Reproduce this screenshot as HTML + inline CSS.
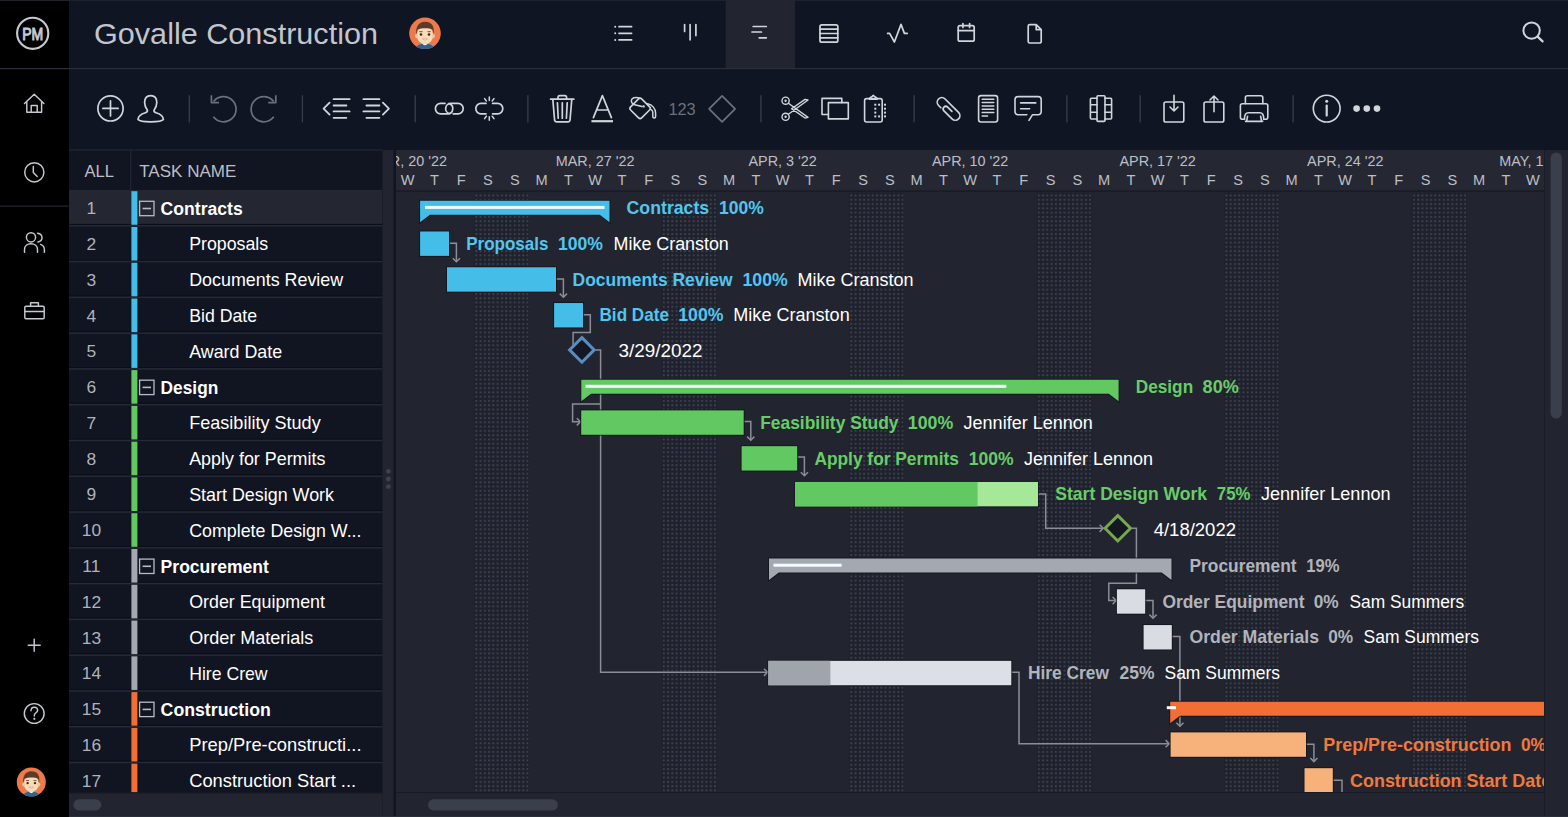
<!DOCTYPE html><html><head><meta charset="utf-8"><title>Govalle Construction</title><style>
html,body{margin:0;padding:0;width:1568px;height:817px;overflow:hidden;background:#0f1522;font-family:"Liberation Sans", sans-serif}
svg{position:absolute;left:0;top:0;display:block}
</style></head><body>
<svg width="1568" height="817" viewBox="0 0 1568 817" font-family='"Liberation Sans", sans-serif'>
<defs>
<pattern id="dots3" x="475.27" y="194.5" width="4.27" height="4.28" patternUnits="userSpaceOnUse"><rect x="0" y="0" width="2" height="2" rx="0.6" fill="#3d4150"/></pattern>
<pattern id="dots10" x="662.80" y="194.5" width="4.27" height="4.28" patternUnits="userSpaceOnUse"><rect x="0" y="0" width="2" height="2" rx="0.6" fill="#3d4150"/></pattern>
<pattern id="dots17" x="850.33" y="194.5" width="4.27" height="4.28" patternUnits="userSpaceOnUse"><rect x="0" y="0" width="2" height="2" rx="0.6" fill="#3d4150"/></pattern>
<pattern id="dots24" x="1037.86" y="194.5" width="4.27" height="4.28" patternUnits="userSpaceOnUse"><rect x="0" y="0" width="2" height="2" rx="0.6" fill="#3d4150"/></pattern>
<pattern id="dots31" x="1225.39" y="194.5" width="4.27" height="4.28" patternUnits="userSpaceOnUse"><rect x="0" y="0" width="2" height="2" rx="0.6" fill="#3d4150"/></pattern>
<pattern id="dots38" x="1412.92" y="194.5" width="4.27" height="4.28" patternUnits="userSpaceOnUse"><rect x="0" y="0" width="2" height="2" rx="0.6" fill="#3d4150"/></pattern>
<clipPath id="gclip"><rect x="396" y="150" width="1148" height="642.6"/></clipPath>
<clipPath id="gridclip"><rect x="69" y="150" width="313.5" height="642.6"/></clipPath>
</defs>
<rect x="0" y="0" width="1568" height="817" fill="#0f1522"/>
<rect x="0" y="0" width="69" height="817" fill="#000000"/>
<rect x="0" y="68" width="1568" height="1.2" fill="#2b2f3b"/>
<rect x="0" y="0" width="1568" height="1" fill="#1e222d"/>
<rect x="0" y="205.6" width="68.5" height="1" fill="#2b2f3b"/>
<rect x="725.6" y="0" width="69.4" height="68" fill="#222530"/>
<g fill="none" stroke="#c6c9d0" stroke-width="2.1">
<circle cx="32.7" cy="33.3" r="15.6"/>
</g>
<text x="32.70" y="40.00" font-size="16.60" fill="#c6c9d0" text-anchor="middle" textLength="21.00" lengthAdjust="spacingAndGlyphs" stroke="#c6c9d0" stroke-width="1">PM</text>
<g fill="none" stroke="#c6c9d0" stroke-width="1.45" stroke-linejoin="round" stroke-linecap="round">
<path d="M24.5 103.5 L34.2 94.2 L43.9 103.5 M26.8 101.5 V112.2 H41.6 V101.5 M31.2 112.2 V105.5 H37.2 V112.2"/>
<circle cx="34.3" cy="172.3" r="9.6"/><path d="M33.3 166.5 V172.6 L37.2 176.4"/>
<circle cx="31" cy="237.3" r="4.6"/><path d="M24.5 252.3 V249.5 C24.5 245.8 27.4 243.8 31 243.8 C34.6 243.8 37.5 245.8 37.5 249.5 V252.3"/>
<path d="M37.6 233.2 C40.4 233.6 42 235.6 42 237.6 C42 239.8 40.2 241.6 38 242 M40.6 244.4 C43 245.3 44.4 247.1 44.4 249.6 V252.3"/>
<rect x="24.8" y="306.2" width="19.4" height="12.6" rx="1.2"/><path d="M30.6 306.2 V302.8 H38.4 V306.2 M24.8 311.4 H44.2"/>
<path d="M34.2 639.3 V651.3 M28.2 645.3 H40.2"/>
<circle cx="34.2" cy="713.5" r="9.9"/><path d="M31 710.8 C31 708.6 32.5 707.3 34.3 707.3 C36.2 707.3 37.6 708.6 37.6 710.4 C37.6 712.6 34.3 713 34.3 715.4 V716"/>
</g>
<circle cx="34.3" cy="718.8" r="1.1" fill="#c6c9d0"/>
<g transform="translate(31.30 782.00) scale(0.9177)">
<clipPath id="av1"><circle cx="0" cy="0" r="15.8"/></clipPath>
<circle cx="0" cy="0" r="15.8" fill="#ec7a4b"/>
<g clip-path="url(#av1)">
<path d="M-10 17 C-9 12 -5 10.5 0 10.5 C5 10.5 9 12 10 17 Z" fill="#2d6496"/>
<rect x="-2" y="7" width="4" height="4.5" fill="#f3d3b0"/>
<path d="M-2.2 10.4 L0 12.2 L2.2 10.4" fill="#ffffff"/>
</g>
<ellipse cx="0" cy="1.8" rx="8.2" ry="9.2" fill="#f8dcb9"/>
<ellipse cx="-8.2" cy="2.6" rx="1.6" ry="2.3" fill="#f1c9a0"/><ellipse cx="8.2" cy="2.6" rx="1.6" ry="2.3" fill="#f1c9a0"/>
<path d="M-8.6 1.5 C-9.8 -6 -6.5 -11.6 0 -11.6 C6.8 -11.6 9.8 -7 8.6 1.5 L7.6 -3.6 C4 -5.4 -3 -5.6 -7.6 -3.6 Z" fill="#5b3b2b"/>
<circle cx="-4" cy="1.2" r="1.3" fill="#3a2318"/><circle cx="4" cy="1.2" r="1.3" fill="#3a2318"/>
<path d="M-5.8 -1.6 H-2.4 M2.4 -1.6 H5.8" stroke="#6a4530" stroke-width="0.9"/>
<path d="M-2.6 5.6 Q0 8.2 2.6 5.6 Z" fill="#ffffff" stroke="#c9806a" stroke-width="0.5"/>
</g>
<text x="94.00" y="43.70" font-size="29.40" fill="#c2c5cd" textLength="284.00" lengthAdjust="spacingAndGlyphs">Govalle Construction</text>
<g transform="translate(425.00 33.30) scale(1.0000)">
<clipPath id="av2"><circle cx="0" cy="0" r="15.8"/></clipPath>
<circle cx="0" cy="0" r="15.8" fill="#ec7a4b"/>
<g clip-path="url(#av2)">
<path d="M-10 17 C-9 12 -5 10.5 0 10.5 C5 10.5 9 12 10 17 Z" fill="#2d6496"/>
<rect x="-2" y="7" width="4" height="4.5" fill="#f3d3b0"/>
<path d="M-2.2 10.4 L0 12.2 L2.2 10.4" fill="#ffffff"/>
</g>
<ellipse cx="0" cy="1.8" rx="8.2" ry="9.2" fill="#f8dcb9"/>
<ellipse cx="-8.2" cy="2.6" rx="1.6" ry="2.3" fill="#f1c9a0"/><ellipse cx="8.2" cy="2.6" rx="1.6" ry="2.3" fill="#f1c9a0"/>
<path d="M-8.6 1.5 C-9.8 -6 -6.5 -11.6 0 -11.6 C6.8 -11.6 9.8 -7 8.6 1.5 L7.6 -3.6 C4 -5.4 -3 -5.6 -7.6 -3.6 Z" fill="#5b3b2b"/>
<circle cx="-4" cy="1.2" r="1.3" fill="#3a2318"/><circle cx="4" cy="1.2" r="1.3" fill="#3a2318"/>
<path d="M-5.8 -1.6 H-2.4 M2.4 -1.6 H5.8" stroke="#6a4530" stroke-width="0.9"/>
<path d="M-2.6 5.6 Q0 8.2 2.6 5.6 Z" fill="#ffffff" stroke="#c9806a" stroke-width="0.5"/>
</g>
<g fill="none" stroke="#d2d5dc" stroke-width="1.7" stroke-linecap="round" stroke-linejoin="round">
<path d="M619 26.7 H631.6 M619 33.3 H631.6 M619 39.9 H631.6"/>
</g>
<g fill="#d2d5dc"><circle cx="615.2" cy="26.7" r="1"/><circle cx="615.2" cy="33.3" r="1"/><circle cx="615.2" cy="39.9" r="1"/></g>
<g fill="none" stroke="#d2d5dc" stroke-width="1.7" stroke-linecap="round" stroke-linejoin="round">
<path d="M684.6 24.6 V31.4 M690.1 24.6 V39.8 M695.9 24.6 V35.6"/>
<path d="M753.2 26.5 H766.3 M752 32 H761.4 M759.2 37.8 H766.3"/>
<rect x="820" y="24.8" width="17.8" height="17.4" rx="1.8"/><path d="M820 29.2 H837.8 M820 33.5 H837.8 M820 37.8 H837.8"/>
<path d="M887.6 33.4 H889.6 L894.4 42 L901 24.4 L904.4 33.4 H907.2"/>
<rect x="958.2" y="25.6" width="16" height="15.6" rx="1.8"/><path d="M958.2 30.6 H974.2 M962.9 23.6 V27.4 M969.6 23.6 V27.4"/>
<path d="M1029.8 24.6 H1036.2 L1041.2 29.6 V41.4 A1.6 1.6 0 0 1 1039.6 43 H1029.8 A1.6 1.6 0 0 1 1028.2 41.4 V26.2 A1.6 1.6 0 0 1 1029.8 24.6 Z M1036.2 24.6 V29.6 H1041.2"/>
<circle cx="1531.6" cy="30.6" r="8.2" stroke-width="2"/><path d="M1537.6 36.6 L1542.6 41.4" stroke-width="2.2"/>
</g>
<rect x="188.65" y="95.2" width="1.3" height="27.2" fill="#3a3e4a"/>
<rect x="301.75" y="95.2" width="1.3" height="27.2" fill="#3a3e4a"/>
<rect x="414.55" y="95.2" width="1.3" height="27.2" fill="#3a3e4a"/>
<rect x="527.25" y="95.2" width="1.3" height="27.2" fill="#3a3e4a"/>
<rect x="760.25" y="95.2" width="1.3" height="27.2" fill="#3a3e4a"/>
<rect x="913.45" y="95.2" width="1.3" height="27.2" fill="#3a3e4a"/>
<rect x="1066.25" y="95.2" width="1.3" height="27.2" fill="#3a3e4a"/>
<rect x="1139.55" y="95.2" width="1.3" height="27.2" fill="#3a3e4a"/>
<rect x="1292.45" y="95.2" width="1.3" height="27.2" fill="#3a3e4a"/>
<g fill="none" stroke="#d2d5dc" stroke-width="1.7" stroke-linecap="round" stroke-linejoin="round">
<circle cx="110.5" cy="108.4" r="12.6"/><path d="M110.5 100.8 V116 M102.9 108.4 H118.1"/>
<path d="M150.7 95.6 C146.4 95.6 144.6 98.8 144.6 102.6 C144.6 106.2 146.2 108.6 147.4 110.2 C147.6 111.6 147 112.3 145.4 112.8 C140.6 114.2 138.2 116.2 138 119.6 C139 121 143 121.8 150.7 121.8 C158.4 121.8 162.4 121 163.4 119.6 C163.2 116.2 160.8 114.2 156 112.8 C154.4 112.3 153.8 111.6 154 110.2 C155.2 108.6 156.8 106.2 156.8 102.6 C156.8 98.8 155 95.6 150.7 95.6 Z"/>
<path d="M329.6 102.6 L323.6 108.6 L329.6 114.6 M333.6 99.2 H349.6 M333.6 105.5 H346.4 M333.6 111.4 H349.6 M333.6 117.8 H346.4" stroke-width="1.8"/>
<path d="M382.9 102.6 L388.9 108.6 L382.9 114.6 M363.4 99.2 H379.4 M366.4 105.5 H379.4 M363.4 111.4 H379.4 M366.4 117.8 H379.4" stroke-width="1.8"/>
<path d="M445 103.4 H440.6 A5.2 5.2 0 0 0 440.6 113.8 H447.6 A5.2 5.2 0 0 0 449 103.6" />
<path d="M453.2 113.8 H458 A5.2 5.2 0 0 0 458 103.4 H451 A5.2 5.2 0 0 0 449.4 113.6" />
<path d="M486 103.4 H481 A5.2 5.2 0 0 0 481 113.8 H486 M492.6 103.4 H497.6 A5.2 5.2 0 0 1 497.6 113.8 H492.6"/>
<path d="M489.3 97 V100.4 M484.6 98.6 L486.4 101 M494 98.6 L492.2 101 M489.3 116.8 V120.2 M484.6 118.6 L486.4 116.2 M494 118.6 L492.2 116.2" stroke-width="1.5"/>
<path d="M550.6 99.2 H573.8 M552.8 99.2 L554.6 120.2 A1.8 1.8 0 0 0 556.4 121.8 H568.2 A1.8 1.8 0 0 0 570 120.2 L571.8 99.2 M558 99 V97.2 A1.8 1.8 0 0 1 559.8 95.6 H564.8 A1.8 1.8 0 0 1 566.6 97.2 V99 M557.4 102.8 L558.2 118.2 M562.3 102.8 V118.2 M567.2 102.8 L566.4 118.2"/>
<path d="M593.4 117.6 L602.4 95.6 L611.4 117.6 M596.6 110 H608.2"/>
<path d="M591.4 121.2 H613" stroke-width="2.2" stroke-linecap="butt"/>
<rect x="632.3" y="100.6" width="15.6" height="15.6" rx="2.2" transform="rotate(45 640.1 108.4)" stroke-width="1.6"/>
<path d="M633.6 104.4 C630.4 102.6 630.6 98.8 633.8 97.8 C635.8 97.2 638 97.4 639.6 98.2 M633.6 104.4 L642 106.4 M647.6 103.8 C652.4 104.8 655.6 108.6 655.6 113 V116.6 C655.6 118.6 652.8 118.6 652.8 116.6 V112.6 C652.8 111 652 110 651.2 109.6" stroke-width="1.5"/>
</g>
<circle cx="643.6" cy="106.4" r="1.2" fill="#d2d5dc"/>
<text x="668.40" y="114.80" font-size="17.30" fill="#6c707b" textLength="27.30" lengthAdjust="spacingAndGlyphs">123</text>
<g fill="none" stroke="#6c707b" stroke-width="1.7" stroke-linejoin="round">
<path d="M722.1 95.8 L735.1 108.8 L722.1 121.8 L709.1 108.8 Z"/>
<path d="M213.6 101.4 A12.6 12.6 0 1 1 213.4 116.8"/>
<path d="M211.4 95.2 V102.6 H219"/>
<path d="M273.6 101.4 A12.6 12.6 0 1 0 273.8 116.8"/>
<path d="M275.8 95.2 V102.6 H268.2"/>
</g>
<g fill="none" stroke="#d2d5dc" stroke-width="1.6" stroke-linecap="round" stroke-linejoin="round">
<circle cx="785.6" cy="100.7" r="3.6" stroke-width="1.4"/><circle cx="785.6" cy="116.8" r="3.6" stroke-width="1.4"/>
<path d="M788.4 103.2 L808 117.4 L805 118 L791.6 108.6 M788.4 114.2 L808 100 L805 99.4 L791.6 108.8" stroke-width="1.4"/>
<circle cx="785.6" cy="100.7" r="0.6" stroke-width="1.2"/><circle cx="785.6" cy="116.8" r="0.6" stroke-width="1.2"/>
<path d="M828.4 114.5 H822 V98.4 H841.8 V102.6"/><rect x="828.4" y="102.6" width="19.9" height="16.3"/>
<rect x="864.6" y="98.6" width="17.6" height="23.4" rx="2"/>
<path d="M869.4 99.2 C869.4 97.6 871 96.8 872.2 96.4 L873.3 95.4 L874.4 96.4 C875.6 96.8 877.2 97.6 877.2 99.2 Z"/>
</g>
<g fill="#d2d5dc">
<rect x="874.3" y="103.7" width="2" height="2"/>
<rect x="884.0" y="103.7" width="2" height="2"/>
<rect x="874.3" y="107.7" width="2" height="2"/>
<rect x="884.0" y="107.7" width="2" height="2"/>
<rect x="874.3" y="111.6" width="2" height="2"/>
<rect x="884.0" y="111.6" width="2" height="2"/>
<rect x="874.3" y="115.4" width="2" height="2"/>
<rect x="884.0" y="115.4" width="2" height="2"/>
<rect x="878.1" y="103.7" width="2" height="2"/>
<rect x="878.1" y="115.4" width="2" height="2"/>
</g>
<g fill="none" stroke="#d2d5dc" stroke-width="1.8" stroke-linecap="round" stroke-linejoin="round">
<path d="M-5.8 4.6 H-9 A4.6 4.6 0 0 1 -9 -4.6 H10 A4.6 4.6 0 0 1 10 4.6 H-1.4 A2.6 2.6 0 0 1 -1.4 -0.6 H4.6" transform="translate(948.2 108.6) rotate(45)" stroke-width="1.7"/>
</g>
<g fill="none" stroke="#d2d5dc" stroke-width="1.6" stroke-linecap="round" stroke-linejoin="round">
<rect x="978.6" y="95.6" width="19" height="26.4" rx="2.4"/>
<path d="M982.2 99.3 H993.8 M982.2 102.6 H993.8 M982.2 106 H993.8 M982.2 109.3 H993.8 M982.2 112.6 H993.8 M982.2 115.9 H987.6" stroke-width="1.5"/>
<path d="M1026.8 114.8 H1018 A3 3 0 0 1 1015 111.8 V99.6 A3 3 0 0 1 1018 96.6 H1038.2 A3 3 0 0 1 1041.2 99.6 V111.8 A3 3 0 0 1 1038.2 114.8 H1032.4 L1029 120.4"/>
<path d="M1020.6 102.9 H1035.8 M1020.6 108.7 H1029.6"/>
<rect x="1097" y="95.8" width="8" height="25.6" rx="1"/>
<path d="M1097 98.2 H1091.4 A1 1 0 0 0 1090.4 99.2 V118 A1 1 0 0 0 1091.4 119 H1097 M1090.4 104.8 H1097 M1090.4 112.2 H1097"/>
<path d="M1105 98.2 H1110.6 A1 1 0 0 1 1111.6 99.2 V118 A1 1 0 0 1 1110.6 119 H1105 M1111.6 104.8 H1105 M1111.6 112.2 H1105"/>
<rect x="1164" y="102" width="19.8" height="20" rx="1.8"/>
<path d="M1174 95.2 V111 M1170 107 L1174 111 L1178 107"/>
<rect x="1204" y="102" width="19.8" height="20" rx="1.8"/>
<path d="M1214 111.8 V96 M1210 100 L1214 96 L1218 100"/>
<path d="M1245.4 103.6 V97.8 A2 2 0 0 1 1247.4 95.8 H1260.8 A2 2 0 0 1 1262.8 97.8 V103.6"/>
<path d="M1244.6 119.2 H1242.4 A2 2 0 0 1 1240.4 117.2 V105.8 A2 2 0 0 1 1242.4 103.8 H1265.8 A2 2 0 0 1 1267.8 105.8 V117.2 A2 2 0 0 1 1265.8 119.2 H1263.6"/>
<path d="M1244.4 119.4 C1244.4 114.6 1245.6 112.8 1248.4 112.8 H1259.8 C1262.6 112.8 1263.8 114.6 1263.8 119.4 M1246.6 121.4 L1247.6 116.2 M1261.6 121.4 L1260.6 116.2 M1245.6 121.4 H1262.6"/>
<circle cx="1326.7" cy="108.6" r="13.4"/>
<path d="M1326.7 105.6 V115.6" stroke-width="2.2"/>
</g>
<circle cx="1326.7" cy="101.2" r="1.5" fill="#d2d5dc"/>
<circle cx="1356.6" cy="108.6" r="3.3" fill="#d2d5dc"/>
<circle cx="1366.8" cy="108.6" r="3.3" fill="#d2d5dc"/>
<circle cx="1377.0" cy="108.6" r="3.3" fill="#d2d5dc"/>
<rect x="69.0" y="150" width="313.5" height="667.0" fill="#111421"/>
<rect x="69.0" y="149.4" width="313.5" height="1.2" fill="#252935"/>
<rect x="130.2" y="150" width="1" height="40" fill="#252935"/>
<text x="84.60" y="176.60" font-size="17.20" fill="#bcbfc6" textLength="29.40" lengthAdjust="spacingAndGlyphs">ALL</text>
<text x="139.20" y="176.60" font-size="17.20" fill="#bcbfc6" textLength="97.20" lengthAdjust="spacingAndGlyphs">TASK NAME</text>
<g clip-path="url(#gridclip)">
<rect x="69.0" y="190.00" width="313.5" height="35.78" fill="#242732"/>
<rect x="69.0" y="223.88" width="313.5" height="1.2" fill="#0b0e16"/>
<rect x="69.0" y="225.03" width="313.5" height="1.5" fill="#262a36"/>
<rect x="131.4" y="191.20" width="6" height="33.58" fill="#44bde8"/>
<text x="91.40" y="214.19" font-size="17.40" fill="#b0b3ba" text-anchor="middle">1</text>
<rect x="139.6" y="201.29" width="14.4" height="14.4" fill="none" stroke="#b9bcc4" stroke-width="1.3"/>
<rect x="142.6" y="207.69" width="8.4" height="1.6" fill="#b9bcc4"/>
<text x="160.60" y="214.89" font-size="17.60" fill="#ffffff" font-weight="bold">Contracts</text>
<rect x="69.0" y="259.66" width="313.5" height="1.2" fill="#0b0e16"/>
<rect x="69.0" y="260.81" width="313.5" height="1.5" fill="#262a36"/>
<rect x="131.4" y="226.98" width="6" height="33.58" fill="#44bde8"/>
<text x="91.40" y="249.97" font-size="17.40" fill="#b0b3ba" text-anchor="middle">2</text>
<text x="189.20" y="250.37" font-size="17.90" fill="#ffffff" textLength="79.00" lengthAdjust="spacingAndGlyphs">Proposals</text>
<rect x="69.0" y="295.44" width="313.5" height="1.2" fill="#0b0e16"/>
<rect x="69.0" y="296.59" width="313.5" height="1.5" fill="#262a36"/>
<rect x="131.4" y="262.76" width="6" height="33.58" fill="#44bde8"/>
<text x="91.40" y="285.75" font-size="17.40" fill="#b0b3ba" text-anchor="middle">3</text>
<text x="189.20" y="286.15" font-size="17.90" fill="#ffffff" textLength="154.00" lengthAdjust="spacingAndGlyphs">Documents Review</text>
<rect x="69.0" y="331.22" width="313.5" height="1.2" fill="#0b0e16"/>
<rect x="69.0" y="332.37" width="313.5" height="1.5" fill="#262a36"/>
<rect x="131.4" y="298.54" width="6" height="33.58" fill="#44bde8"/>
<text x="91.40" y="321.53" font-size="17.40" fill="#b0b3ba" text-anchor="middle">4</text>
<text x="189.20" y="321.93" font-size="17.90" fill="#ffffff" textLength="67.90" lengthAdjust="spacingAndGlyphs">Bid Date</text>
<rect x="69.0" y="367.00" width="313.5" height="1.2" fill="#0b0e16"/>
<rect x="69.0" y="368.15" width="313.5" height="1.5" fill="#262a36"/>
<rect x="131.4" y="334.32" width="6" height="33.58" fill="#44bde8"/>
<text x="91.40" y="357.31" font-size="17.40" fill="#b0b3ba" text-anchor="middle">5</text>
<text x="189.20" y="357.71" font-size="17.90" fill="#ffffff" textLength="92.90" lengthAdjust="spacingAndGlyphs">Award Date</text>
<rect x="69.0" y="402.78" width="313.5" height="1.2" fill="#0b0e16"/>
<rect x="69.0" y="403.93" width="313.5" height="1.5" fill="#262a36"/>
<rect x="131.4" y="370.10" width="6" height="33.58" fill="#62c962"/>
<text x="91.40" y="393.09" font-size="17.40" fill="#b0b3ba" text-anchor="middle">6</text>
<rect x="139.6" y="380.19" width="14.4" height="14.4" fill="none" stroke="#b9bcc4" stroke-width="1.3"/>
<rect x="142.6" y="386.59" width="8.4" height="1.6" fill="#b9bcc4"/>
<text x="160.60" y="393.79" font-size="17.60" fill="#ffffff" font-weight="bold" textLength="57.70" lengthAdjust="spacingAndGlyphs">Design</text>
<rect x="69.0" y="438.56" width="313.5" height="1.2" fill="#0b0e16"/>
<rect x="69.0" y="439.71" width="313.5" height="1.5" fill="#262a36"/>
<rect x="131.4" y="405.88" width="6" height="33.58" fill="#62c962"/>
<text x="91.40" y="428.87" font-size="17.40" fill="#b0b3ba" text-anchor="middle">7</text>
<text x="189.20" y="429.27" font-size="17.90" fill="#ffffff" textLength="131.50" lengthAdjust="spacingAndGlyphs">Feasibility Study</text>
<rect x="69.0" y="474.34" width="313.5" height="1.2" fill="#0b0e16"/>
<rect x="69.0" y="475.49" width="313.5" height="1.5" fill="#262a36"/>
<rect x="131.4" y="441.66" width="6" height="33.58" fill="#62c962"/>
<text x="91.40" y="464.65" font-size="17.40" fill="#b0b3ba" text-anchor="middle">8</text>
<text x="189.20" y="465.05" font-size="17.90" fill="#ffffff">Apply for Permits</text>
<rect x="69.0" y="510.12" width="313.5" height="1.2" fill="#0b0e16"/>
<rect x="69.0" y="511.27" width="313.5" height="1.5" fill="#262a36"/>
<rect x="131.4" y="477.44" width="6" height="33.58" fill="#62c962"/>
<text x="91.40" y="500.43" font-size="17.40" fill="#b0b3ba" text-anchor="middle">9</text>
<text x="189.20" y="500.83" font-size="17.90" fill="#ffffff">Start Design Work</text>
<rect x="69.0" y="545.90" width="313.5" height="1.2" fill="#0b0e16"/>
<rect x="69.0" y="547.05" width="313.5" height="1.5" fill="#262a36"/>
<rect x="131.4" y="513.22" width="6" height="33.58" fill="#62c962"/>
<text x="91.40" y="536.21" font-size="17.40" fill="#b0b3ba" text-anchor="middle">10</text>
<text x="189.20" y="536.61" font-size="17.90" fill="#ffffff" textLength="172.30" lengthAdjust="spacingAndGlyphs">Complete Design W...</text>
<rect x="69.0" y="581.68" width="313.5" height="1.2" fill="#0b0e16"/>
<rect x="69.0" y="582.83" width="313.5" height="1.5" fill="#262a36"/>
<rect x="131.4" y="549.00" width="6" height="33.58" fill="#a4a8b0"/>
<text x="91.40" y="571.99" font-size="17.40" fill="#b0b3ba" text-anchor="middle">11</text>
<rect x="139.6" y="559.09" width="14.4" height="14.4" fill="none" stroke="#b9bcc4" stroke-width="1.3"/>
<rect x="142.6" y="565.49" width="8.4" height="1.6" fill="#b9bcc4"/>
<text x="160.60" y="572.69" font-size="17.60" fill="#ffffff" font-weight="bold" textLength="108.30" lengthAdjust="spacingAndGlyphs">Procurement</text>
<rect x="69.0" y="617.46" width="313.5" height="1.2" fill="#0b0e16"/>
<rect x="69.0" y="618.61" width="313.5" height="1.5" fill="#262a36"/>
<rect x="131.4" y="584.78" width="6" height="33.58" fill="#a4a8b0"/>
<text x="91.40" y="607.77" font-size="17.40" fill="#b0b3ba" text-anchor="middle">12</text>
<text x="189.20" y="608.17" font-size="17.90" fill="#ffffff" textLength="135.80" lengthAdjust="spacingAndGlyphs">Order Equipment</text>
<rect x="69.0" y="653.24" width="313.5" height="1.2" fill="#0b0e16"/>
<rect x="69.0" y="654.39" width="313.5" height="1.5" fill="#262a36"/>
<rect x="131.4" y="620.56" width="6" height="33.58" fill="#a4a8b0"/>
<text x="91.40" y="643.55" font-size="17.40" fill="#b0b3ba" text-anchor="middle">13</text>
<text x="189.20" y="643.95" font-size="17.90" fill="#ffffff" textLength="124.20" lengthAdjust="spacingAndGlyphs">Order Materials</text>
<rect x="69.0" y="689.02" width="313.5" height="1.2" fill="#0b0e16"/>
<rect x="69.0" y="690.17" width="313.5" height="1.5" fill="#262a36"/>
<rect x="131.4" y="656.34" width="6" height="33.58" fill="#a4a8b0"/>
<text x="91.40" y="679.33" font-size="17.40" fill="#b0b3ba" text-anchor="middle">14</text>
<text x="189.20" y="679.73" font-size="17.90" fill="#ffffff" textLength="78.40" lengthAdjust="spacingAndGlyphs">Hire Crew</text>
<rect x="69.0" y="724.80" width="313.5" height="1.2" fill="#0b0e16"/>
<rect x="69.0" y="725.95" width="313.5" height="1.5" fill="#262a36"/>
<rect x="131.4" y="692.12" width="6" height="33.58" fill="#f26e34"/>
<text x="91.40" y="715.11" font-size="17.40" fill="#b0b3ba" text-anchor="middle">15</text>
<rect x="139.6" y="702.21" width="14.4" height="14.4" fill="none" stroke="#b9bcc4" stroke-width="1.3"/>
<rect x="142.6" y="708.61" width="8.4" height="1.6" fill="#b9bcc4"/>
<text x="160.60" y="715.81" font-size="17.60" fill="#ffffff" font-weight="bold" textLength="110.20" lengthAdjust="spacingAndGlyphs">Construction</text>
<rect x="69.0" y="760.58" width="313.5" height="1.2" fill="#0b0e16"/>
<rect x="69.0" y="761.73" width="313.5" height="1.5" fill="#262a36"/>
<rect x="131.4" y="727.90" width="6" height="33.58" fill="#f26e34"/>
<text x="91.40" y="750.89" font-size="17.40" fill="#b0b3ba" text-anchor="middle">16</text>
<text x="189.20" y="751.29" font-size="17.90" fill="#ffffff" textLength="172.30" lengthAdjust="spacingAndGlyphs">Prep/Pre-constructi...</text>
<rect x="69.0" y="796.36" width="313.5" height="1.2" fill="#0b0e16"/>
<rect x="69.0" y="797.51" width="313.5" height="1.5" fill="#262a36"/>
<rect x="131.4" y="763.68" width="6" height="33.58" fill="#f26e34"/>
<text x="91.40" y="786.67" font-size="17.40" fill="#b0b3ba" text-anchor="middle">17</text>
<text x="189.20" y="787.07" font-size="17.90" fill="#ffffff" textLength="166.90" lengthAdjust="spacingAndGlyphs">Construction Start ...</text>
</g>
<rect x="69.0" y="792.6" width="313.5" height="24.4" fill="#22252f"/>
<rect x="73.4" y="799.3" width="27.9" height="11.1" rx="5.5" fill="#3b3f4c"/>
<rect x="382.5" y="150" width="11" height="667" fill="#22252f"/>
<rect x="394.8" y="150" width="1.2" height="667" fill="#12151d"/>
<circle cx="388.4" cy="471.3" r="2.4" fill="#3e424e"/>
<circle cx="388.4" cy="479.0" r="2.4" fill="#3e424e"/>
<circle cx="388.4" cy="486.6" r="2.4" fill="#3e424e"/>
<rect x="396" y="150" width="1148" height="667.0" fill="#22252f"/>
<rect x="396" y="150" width="1148" height="41" fill="#252833"/>
<g clip-path="url(#gclip)">
<rect x="474.07" y="192.4" width="55.08" height="600.20" fill="#1f222c"/>
<rect x="474.57" y="192.4" width="53.98" height="600.20" fill="url(#dots3)"/>
<rect x="661.60" y="192.4" width="55.08" height="600.20" fill="#1f222c"/>
<rect x="662.10" y="192.4" width="53.98" height="600.20" fill="url(#dots10)"/>
<rect x="849.13" y="192.4" width="55.08" height="600.20" fill="#1f222c"/>
<rect x="849.63" y="192.4" width="53.98" height="600.20" fill="url(#dots17)"/>
<rect x="1036.66" y="192.4" width="55.08" height="600.20" fill="#1f222c"/>
<rect x="1037.16" y="192.4" width="53.98" height="600.20" fill="url(#dots24)"/>
<rect x="1224.19" y="192.4" width="55.08" height="600.20" fill="#1f222c"/>
<rect x="1224.69" y="192.4" width="53.98" height="600.20" fill="url(#dots31)"/>
<rect x="1411.72" y="192.4" width="55.08" height="600.20" fill="#1f222c"/>
<rect x="1412.22" y="192.4" width="53.98" height="600.20" fill="url(#dots38)"/>
<text x="407.59" y="165.70" font-size="14.40" fill="#bcbfc6" text-anchor="middle">MAR, 20 '22</text>
<text x="595.12" y="165.70" font-size="14.40" fill="#bcbfc6" text-anchor="middle">MAR, 27 '22</text>
<text x="782.65" y="165.70" font-size="14.40" fill="#bcbfc6" text-anchor="middle">APR, 3 '22</text>
<text x="970.18" y="165.70" font-size="14.40" fill="#bcbfc6" text-anchor="middle">APR, 10 '22</text>
<text x="1157.71" y="165.70" font-size="14.40" fill="#bcbfc6" text-anchor="middle">APR, 17 '22</text>
<text x="1345.24" y="165.70" font-size="14.40" fill="#bcbfc6" text-anchor="middle">APR, 24 '22</text>
<text x="1532.78" y="165.70" font-size="14.40" fill="#bcbfc6" text-anchor="middle">MAY, 1 '22</text>
<text x="407.59" y="184.60" font-size="14.60" fill="#bcbfc6" text-anchor="middle">W</text>
<text x="434.38" y="184.60" font-size="14.60" fill="#bcbfc6" text-anchor="middle">T</text>
<text x="461.17" y="184.60" font-size="14.60" fill="#bcbfc6" text-anchor="middle">F</text>
<text x="487.96" y="184.60" font-size="14.60" fill="#bcbfc6" text-anchor="middle">S</text>
<text x="514.75" y="184.60" font-size="14.60" fill="#bcbfc6" text-anchor="middle">S</text>
<text x="541.54" y="184.60" font-size="14.60" fill="#bcbfc6" text-anchor="middle">M</text>
<text x="568.34" y="184.60" font-size="14.60" fill="#bcbfc6" text-anchor="middle">T</text>
<text x="595.12" y="184.60" font-size="14.60" fill="#bcbfc6" text-anchor="middle">W</text>
<text x="621.91" y="184.60" font-size="14.60" fill="#bcbfc6" text-anchor="middle">T</text>
<text x="648.70" y="184.60" font-size="14.60" fill="#bcbfc6" text-anchor="middle">F</text>
<text x="675.49" y="184.60" font-size="14.60" fill="#bcbfc6" text-anchor="middle">S</text>
<text x="702.28" y="184.60" font-size="14.60" fill="#bcbfc6" text-anchor="middle">S</text>
<text x="729.08" y="184.60" font-size="14.60" fill="#bcbfc6" text-anchor="middle">M</text>
<text x="755.87" y="184.60" font-size="14.60" fill="#bcbfc6" text-anchor="middle">T</text>
<text x="782.65" y="184.60" font-size="14.60" fill="#bcbfc6" text-anchor="middle">W</text>
<text x="809.44" y="184.60" font-size="14.60" fill="#bcbfc6" text-anchor="middle">T</text>
<text x="836.23" y="184.60" font-size="14.60" fill="#bcbfc6" text-anchor="middle">F</text>
<text x="863.02" y="184.60" font-size="14.60" fill="#bcbfc6" text-anchor="middle">S</text>
<text x="889.81" y="184.60" font-size="14.60" fill="#bcbfc6" text-anchor="middle">S</text>
<text x="916.61" y="184.60" font-size="14.60" fill="#bcbfc6" text-anchor="middle">M</text>
<text x="943.39" y="184.60" font-size="14.60" fill="#bcbfc6" text-anchor="middle">T</text>
<text x="970.18" y="184.60" font-size="14.60" fill="#bcbfc6" text-anchor="middle">W</text>
<text x="996.97" y="184.60" font-size="14.60" fill="#bcbfc6" text-anchor="middle">T</text>
<text x="1023.76" y="184.60" font-size="14.60" fill="#bcbfc6" text-anchor="middle">F</text>
<text x="1050.56" y="184.60" font-size="14.60" fill="#bcbfc6" text-anchor="middle">S</text>
<text x="1077.35" y="184.60" font-size="14.60" fill="#bcbfc6" text-anchor="middle">S</text>
<text x="1104.13" y="184.60" font-size="14.60" fill="#bcbfc6" text-anchor="middle">M</text>
<text x="1130.92" y="184.60" font-size="14.60" fill="#bcbfc6" text-anchor="middle">T</text>
<text x="1157.71" y="184.60" font-size="14.60" fill="#bcbfc6" text-anchor="middle">W</text>
<text x="1184.50" y="184.60" font-size="14.60" fill="#bcbfc6" text-anchor="middle">T</text>
<text x="1211.29" y="184.60" font-size="14.60" fill="#bcbfc6" text-anchor="middle">F</text>
<text x="1238.09" y="184.60" font-size="14.60" fill="#bcbfc6" text-anchor="middle">S</text>
<text x="1264.88" y="184.60" font-size="14.60" fill="#bcbfc6" text-anchor="middle">S</text>
<text x="1291.66" y="184.60" font-size="14.60" fill="#bcbfc6" text-anchor="middle">M</text>
<text x="1318.45" y="184.60" font-size="14.60" fill="#bcbfc6" text-anchor="middle">T</text>
<text x="1345.24" y="184.60" font-size="14.60" fill="#bcbfc6" text-anchor="middle">W</text>
<text x="1372.03" y="184.60" font-size="14.60" fill="#bcbfc6" text-anchor="middle">T</text>
<text x="1398.83" y="184.60" font-size="14.60" fill="#bcbfc6" text-anchor="middle">F</text>
<text x="1425.62" y="184.60" font-size="14.60" fill="#bcbfc6" text-anchor="middle">S</text>
<text x="1452.40" y="184.60" font-size="14.60" fill="#bcbfc6" text-anchor="middle">S</text>
<text x="1479.19" y="184.60" font-size="14.60" fill="#bcbfc6" text-anchor="middle">M</text>
<text x="1505.98" y="184.60" font-size="14.60" fill="#bcbfc6" text-anchor="middle">T</text>
<text x="1532.78" y="184.60" font-size="14.60" fill="#bcbfc6" text-anchor="middle">W</text>
<rect x="396" y="190.4" width="1148" height="1.4" fill="#181b24"/>
<path d="M449.00 243.30 L456.40 243.30 L456.40 261.80" fill="none" stroke="#8b8e96" stroke-width="1.5"/>
<path d="M452.80 258.20 L456.40 261.80 L460.00 258.20" fill="none" stroke="#8b8e96" stroke-width="1.5"/>
<path d="M556.00 279.00 L563.40 279.00 L563.40 297.20" fill="none" stroke="#8b8e96" stroke-width="1.5"/>
<path d="M559.80 293.60 L563.40 297.20 L567.00 293.60" fill="none" stroke="#8b8e96" stroke-width="1.5"/>
<path d="M583.00 314.70 L590.30 314.70 L590.30 332.60 L573.10 332.60 L573.10 346.00" fill="none" stroke="#8b8e96" stroke-width="1.5"/>
<path d="M595.80 350.00 L600.60 350.00 L600.60 672.30 L767.60 672.30" fill="none" stroke="#8b8e96" stroke-width="1.5"/>
<path d="M764.00 668.70 L767.60 672.30 L764.00 675.90" fill="none" stroke="#8b8e96" stroke-width="1.5"/>
<path d="M600.60 404.00 L572.60 404.00 L572.60 421.80 L580.40 421.80" fill="none" stroke="#8b8e96" stroke-width="1.5"/>
<path d="M576.80 418.20 L580.40 421.80 L576.80 425.40" fill="none" stroke="#8b8e96" stroke-width="1.5"/>
<path d="M743.70 421.40 L750.80 421.40 L750.80 440.20" fill="none" stroke="#8b8e96" stroke-width="1.5"/>
<path d="M747.20 436.60 L750.80 440.20 L754.40 436.60" fill="none" stroke="#8b8e96" stroke-width="1.5"/>
<path d="M797.20 457.00 L804.40 457.00 L804.40 475.80" fill="none" stroke="#8b8e96" stroke-width="1.5"/>
<path d="M800.80 472.20 L804.40 475.80 L808.00 472.20" fill="none" stroke="#8b8e96" stroke-width="1.5"/>
<path d="M1038.00 494.00 L1045.70 494.00 L1045.70 528.30 L1103.20 528.30" fill="none" stroke="#8b8e96" stroke-width="1.5"/>
<path d="M1099.60 524.70 L1103.20 528.30 L1099.60 531.90" fill="none" stroke="#8b8e96" stroke-width="1.5"/>
<path d="M1132.00 528.30 L1136.40 528.30 L1136.40 583.20 L1108.80 583.20 L1108.80 600.60 L1116.20 600.60" fill="none" stroke="#8b8e96" stroke-width="1.5"/>
<path d="M1112.60 597.00 L1116.20 600.60 L1112.60 604.20" fill="none" stroke="#8b8e96" stroke-width="1.5"/>
<path d="M1145.20 600.60 L1153.00 600.60 L1153.00 618.20" fill="none" stroke="#8b8e96" stroke-width="1.5"/>
<path d="M1149.40 614.60 L1153.00 618.20 L1156.60 614.60" fill="none" stroke="#8b8e96" stroke-width="1.5"/>
<path d="M1171.80 636.40 L1179.90 636.40 L1179.90 726.30" fill="none" stroke="#8b8e96" stroke-width="1.5"/>
<path d="M1176.30 722.70 L1179.90 726.30 L1183.50 722.70" fill="none" stroke="#8b8e96" stroke-width="1.5"/>
<path d="M1011.30 672.30 L1019.00 672.30 L1019.00 743.70 L1169.20 743.70" fill="none" stroke="#8b8e96" stroke-width="1.5"/>
<path d="M1165.60 740.10 L1169.20 743.70 L1165.60 747.30" fill="none" stroke="#8b8e96" stroke-width="1.5"/>
<path d="M1306.00 744.20 L1313.90 744.20 L1313.90 761.60" fill="none" stroke="#8b8e96" stroke-width="1.5"/>
<path d="M1310.30 758.00 L1313.90 761.60 L1317.50 758.00" fill="none" stroke="#8b8e96" stroke-width="1.5"/>
<path d="M1332.80 780.20 L1342.00 780.20 L1342.00 800.00" fill="none" stroke="#8b8e96" stroke-width="1.5"/>
<path d="M420.10 200.80 H609.50 V222.30 L599.70 214.80 H429.90 L420.10 222.30 Z" fill="#44bde8" stroke="#12141a" stroke-opacity="0.8" stroke-width="2" paint-order="stroke"/>
<rect x="425.00" y="205.90" width="179.50" height="3" fill="#f4fbff"/>
<rect x="419.10" y="230.48" width="30.90" height="26.4" fill="#12141a" opacity="0.8"/>
<rect x="420.10" y="231.48" width="28.90" height="24.4" fill="#44bde8"/>
<rect x="446.00" y="266.26" width="111.00" height="26.4" fill="#12141a" opacity="0.8"/>
<rect x="447.00" y="267.26" width="109.00" height="24.4" fill="#44bde8"/>
<rect x="553.10" y="302.04" width="30.90" height="26.4" fill="#12141a" opacity="0.8"/>
<rect x="554.10" y="303.04" width="28.90" height="24.4" fill="#44bde8"/>
<path d="M581.90 337.60 L594.20 349.90 L581.90 362.20 L569.60 349.90 Z" fill="#131823" stroke="#5a8cc0" stroke-width="3" stroke-linejoin="miter"/>
<path d="M581.30 379.70 H1118.60 V401.20 L1108.80 393.70 H591.10 L581.30 401.20 Z" fill="#62c962" stroke="#12141a" stroke-opacity="0.8" stroke-width="2" paint-order="stroke"/>
<rect x="585.50" y="384.80" width="420.80" height="3" fill="#f4fbff"/>
<rect x="580.20" y="409.38" width="164.50" height="26.4" fill="#12141a" opacity="0.8"/>
<rect x="581.20" y="410.38" width="162.50" height="24.4" fill="#62c962"/>
<rect x="740.60" y="445.16" width="57.60" height="26.4" fill="#12141a" opacity="0.8"/>
<rect x="741.60" y="446.16" width="55.60" height="24.4" fill="#62c962"/>
<rect x="794.20" y="480.94" width="244.80" height="26.4" fill="#12141a" opacity="0.8"/>
<rect x="795.20" y="481.94" width="242.80" height="24.4" fill="#a6e89a"/>
<rect x="795.20" y="481.94" width="182.40" height="24.4" fill="#62c962"/>
<path d="M1117.80 515.60 L1130.50 528.30 L1117.80 541.00 L1105.10 528.30 Z" fill="#131823" stroke="#76a84c" stroke-width="3" stroke-linejoin="miter"/>
<path d="M769.00 558.60 H1171.50 V580.10 L1161.70 572.60 H778.80 L769.00 580.10 Z" fill="#a4a8b0" stroke="#12141a" stroke-opacity="0.8" stroke-width="2" paint-order="stroke"/>
<rect x="773.50" y="563.70" width="68.10" height="3" fill="#f4fbff"/>
<rect x="1115.90" y="588.28" width="30.30" height="26.4" fill="#12141a" opacity="0.8"/>
<rect x="1116.90" y="589.28" width="28.30" height="24.4" fill="#d9dce3"/>
<rect x="1142.60" y="624.06" width="30.20" height="26.4" fill="#12141a" opacity="0.8"/>
<rect x="1143.60" y="625.06" width="28.20" height="24.4" fill="#d9dce3"/>
<rect x="767.40" y="659.84" width="244.90" height="26.4" fill="#12141a" opacity="0.8"/>
<rect x="768.40" y="660.84" width="242.90" height="24.4" fill="#dcdfe5"/>
<rect x="768.40" y="660.84" width="62.00" height="24.4" fill="#a0a4ab"/>
<path d="M1170.20 701.72 H1560.00 V723.22 L1550.20 715.72 H1180.00 L1170.20 723.22 Z" fill="#f26e34" stroke="#12141a" stroke-opacity="0.8" stroke-width="2" paint-order="stroke"/>
<rect x="1166.8" y="706.2" width="9.2" height="3" fill="#f4fbff"/>
<rect x="1169.60" y="731.40" width="137.40" height="26.4" fill="#12141a" opacity="0.8"/>
<rect x="1170.60" y="732.40" width="135.40" height="24.4" fill="#f6b27a"/>
<rect x="1303.50" y="767.18" width="30.30" height="26.4" fill="#12141a" opacity="0.8"/>
<rect x="1304.50" y="768.18" width="28.30" height="24.4" fill="#f6b27a"/>
<text x="626.60" y="214.09" font-size="17.70" fill="#52c6f0" font-weight="bold" textLength="82.59" lengthAdjust="spacingAndGlyphs">Contracts</text>
<text x="719.10" y="214.09" font-size="17.70" fill="#52c6f0" font-weight="bold" textLength="44.79" lengthAdjust="spacingAndGlyphs">100%</text>
<text x="466.25" y="249.87" font-size="17.70" fill="#52c6f0" font-weight="bold" textLength="82.20" lengthAdjust="spacingAndGlyphs">Proposals</text>
<text x="557.90" y="249.87" font-size="17.70" fill="#52c6f0" font-weight="bold" textLength="44.99" lengthAdjust="spacingAndGlyphs">100%</text>
<text x="613.60" y="249.87" font-size="18.30" fill="#ffffff" textLength="115.20" lengthAdjust="spacingAndGlyphs">Mike Cranston</text>
<text x="572.60" y="285.65" font-size="17.70" fill="#52c6f0" font-weight="bold" textLength="159.96" lengthAdjust="spacingAndGlyphs">Documents Review</text>
<text x="742.50" y="285.65" font-size="17.70" fill="#52c6f0" font-weight="bold" textLength="45.29" lengthAdjust="spacingAndGlyphs">100%</text>
<text x="797.60" y="285.65" font-size="18.30" fill="#ffffff" textLength="116.00" lengthAdjust="spacingAndGlyphs">Mike Cranston</text>
<text x="599.50" y="321.43" font-size="17.70" fill="#52c6f0" font-weight="bold" textLength="69.50" lengthAdjust="spacingAndGlyphs">Bid Date</text>
<text x="678.20" y="321.43" font-size="17.70" fill="#52c6f0" font-weight="bold" textLength="45.29" lengthAdjust="spacingAndGlyphs">100%</text>
<text x="733.30" y="321.43" font-size="18.30" fill="#ffffff" textLength="116.40" lengthAdjust="spacingAndGlyphs">Mike Cranston</text>
<text x="618.40" y="357.21" font-size="18.30" fill="#ffffff" textLength="84.20" lengthAdjust="spacingAndGlyphs">3/29/2022</text>
<text x="1135.70" y="392.99" font-size="17.70" fill="#68cd68" font-weight="bold" textLength="57.50" lengthAdjust="spacingAndGlyphs">Design</text>
<text x="1202.60" y="392.99" font-size="17.70" fill="#68cd68" font-weight="bold" textLength="36.21" lengthAdjust="spacingAndGlyphs">80%</text>
<text x="760.20" y="428.77" font-size="17.70" fill="#68cd68" font-weight="bold" textLength="138.31" lengthAdjust="spacingAndGlyphs">Feasibility Study</text>
<text x="907.80" y="428.77" font-size="17.70" fill="#68cd68" font-weight="bold" textLength="45.49" lengthAdjust="spacingAndGlyphs">100%</text>
<text x="963.60" y="428.77" font-size="18.30" fill="#ffffff" textLength="129.11" lengthAdjust="spacingAndGlyphs">Jennifer Lennon</text>
<text x="814.40" y="464.55" font-size="17.70" fill="#68cd68" font-weight="bold" textLength="144.50" lengthAdjust="spacingAndGlyphs">Apply for Permits</text>
<text x="968.70" y="464.55" font-size="17.70" fill="#68cd68" font-weight="bold" textLength="44.89" lengthAdjust="spacingAndGlyphs">100%</text>
<text x="1024.00" y="464.55" font-size="18.30" fill="#ffffff" textLength="129.01" lengthAdjust="spacingAndGlyphs">Jennifer Lennon</text>
<text x="1055.30" y="500.33" font-size="17.70" fill="#68cd68" font-weight="bold" textLength="151.76" lengthAdjust="spacingAndGlyphs">Start Design Work</text>
<text x="1216.80" y="500.33" font-size="17.70" fill="#68cd68" font-weight="bold" textLength="33.71" lengthAdjust="spacingAndGlyphs">75%</text>
<text x="1261.00" y="500.33" font-size="18.30" fill="#ffffff" textLength="129.51" lengthAdjust="spacingAndGlyphs">Jennifer Lennon</text>
<text x="1153.70" y="536.11" font-size="18.30" fill="#ffffff" textLength="82.30" lengthAdjust="spacingAndGlyphs">4/18/2022</text>
<text x="1189.50" y="571.89" font-size="17.70" fill="#b1b4bb" font-weight="bold" textLength="107.11" lengthAdjust="spacingAndGlyphs">Procurement</text>
<text x="1306.30" y="571.89" font-size="17.70" fill="#b1b4bb" font-weight="bold" textLength="33.21" lengthAdjust="spacingAndGlyphs">19%</text>
<text x="1162.40" y="607.67" font-size="17.70" fill="#b1b4bb" font-weight="bold" textLength="142.09" lengthAdjust="spacingAndGlyphs">Order Equipment</text>
<text x="1313.70" y="607.67" font-size="17.70" fill="#b1b4bb" font-weight="bold" textLength="25.01" lengthAdjust="spacingAndGlyphs">0%</text>
<text x="1349.40" y="607.67" font-size="18.30" fill="#ffffff" textLength="114.91" lengthAdjust="spacingAndGlyphs">Sam Summers</text>
<text x="1189.50" y="643.45" font-size="17.70" fill="#b1b4bb" font-weight="bold" textLength="129.51" lengthAdjust="spacingAndGlyphs">Order Materials</text>
<text x="1328.20" y="643.45" font-size="17.70" fill="#b1b4bb" font-weight="bold" textLength="25.01" lengthAdjust="spacingAndGlyphs">0%</text>
<text x="1363.60" y="643.45" font-size="18.30" fill="#ffffff" textLength="115.41" lengthAdjust="spacingAndGlyphs">Sam Summers</text>
<text x="1028.00" y="679.23" font-size="17.70" fill="#b1b4bb" font-weight="bold" textLength="80.96" lengthAdjust="spacingAndGlyphs">Hire Crew</text>
<text x="1119.50" y="679.23" font-size="17.70" fill="#b1b4bb" font-weight="bold" textLength="35.01" lengthAdjust="spacingAndGlyphs">25%</text>
<text x="1164.50" y="679.23" font-size="18.30" fill="#ffffff" textLength="115.51" lengthAdjust="spacingAndGlyphs">Sam Summers</text>
<text x="1323.30" y="750.79" font-size="17.70" fill="#f07a3e" font-weight="bold" textLength="188.20" lengthAdjust="spacingAndGlyphs">Prep/Pre-construction</text>
<text x="1520.90" y="750.79" font-size="17.70" fill="#f07a3e" font-weight="bold" textLength="25.01" lengthAdjust="spacingAndGlyphs">0%</text>
<text x="1350.10" y="786.57" font-size="17.70" fill="#f07a3e" font-weight="bold" textLength="201.00" lengthAdjust="spacingAndGlyphs">Construction Start Date</text>
</g>
<rect x="396" y="792.0" width="1148" height="1.2" fill="#181b24"/>
<rect x="396" y="793.2" width="1148" height="23.8" fill="#22252f"/>
<rect x="428" y="799.3" width="130" height="11.1" rx="5.5" fill="#3b3f4c"/>
<rect x="1544" y="150" width="24" height="667" fill="#22252f"/>
<rect x="1544" y="150" width="1" height="667" fill="#1a1d26"/>
<rect x="1550.6" y="152.6" width="11.2" height="266" rx="5.6" fill="#3b3f4c"/>
<rect x="69" y="816" width="1499" height="1" fill="#2a2e3a"/>
<rect x="69" y="792.4" width="313.5" height="1" fill="#151821"/>
</svg></body></html>
